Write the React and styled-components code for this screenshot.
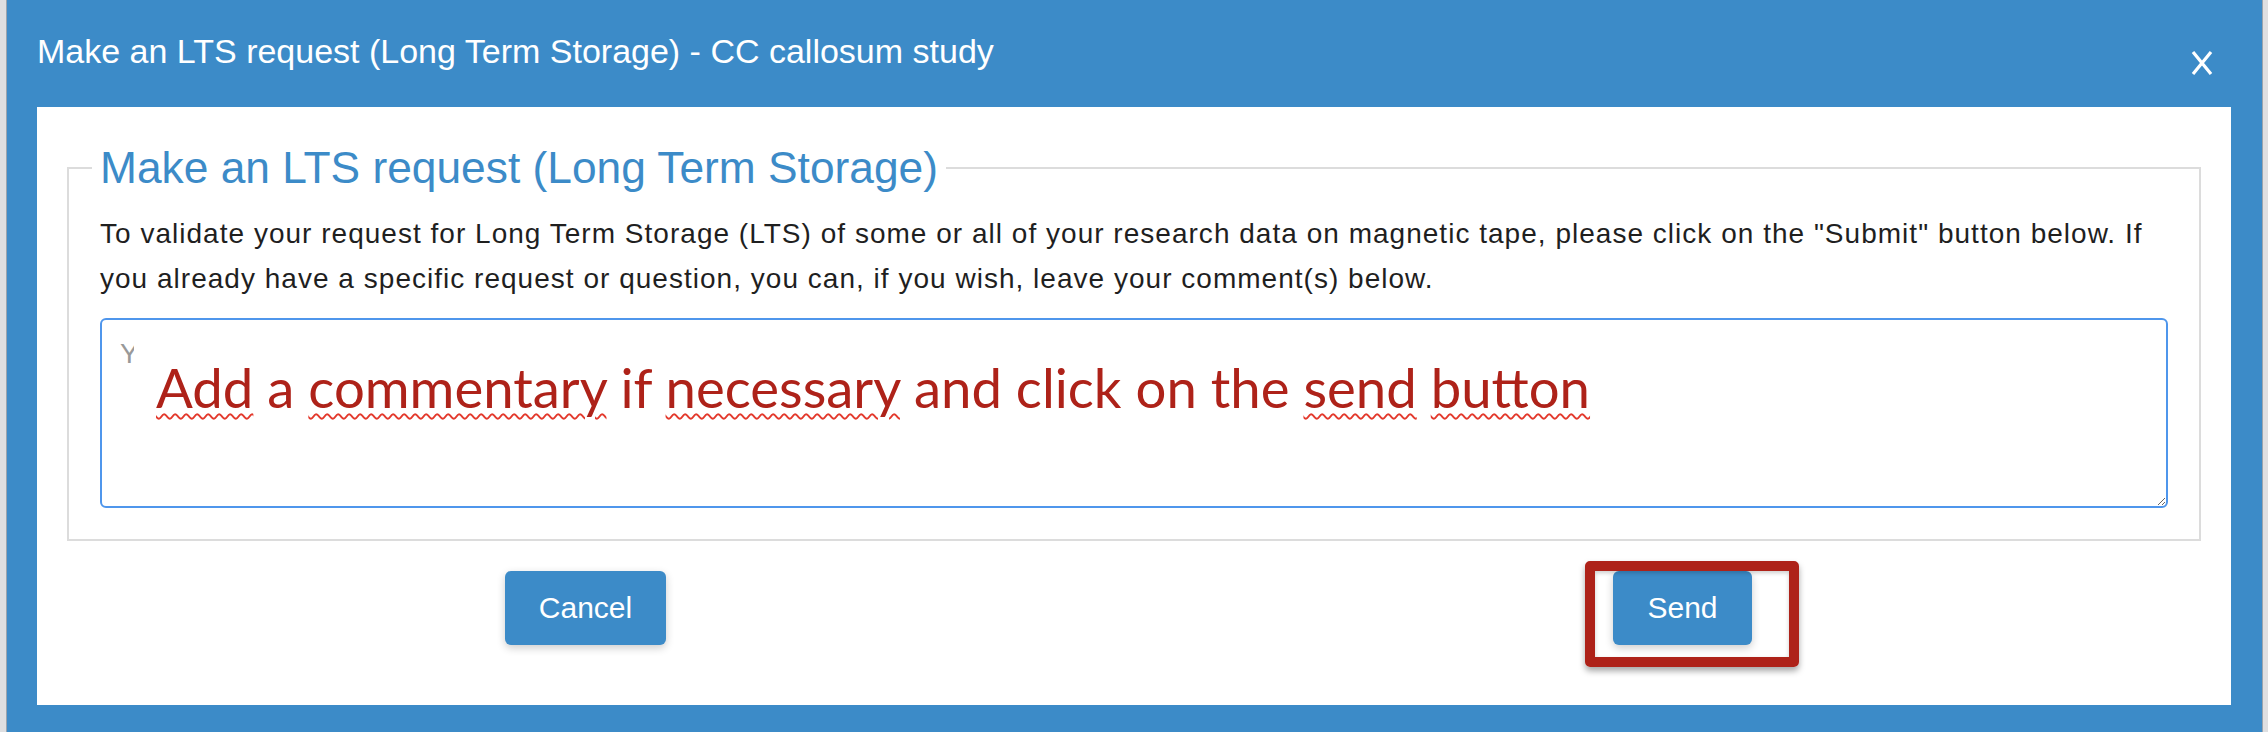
import React from "react";
import styled, { createGlobalStyle } from "styled-components";

const BLUE = "#3c8bc8";

const GlobalStyle = createGlobalStyle`
  html, body {
    margin: 0;
    padding: 0;
    width: 2268px;
    height: 732px;
    overflow: hidden;
    background: #dedfe1;
    font-family: "Liberation Sans", Arial, sans-serif;
  }
  * { box-sizing: border-box; }
`;

const Page = styled.div`
  display: flex;
  height: 732px;
  padding: 0 6px 0 7px;
`;

const Modal = styled.div`
  flex: 1;
  display: flex;
  flex-direction: column;
  background: ${BLUE};
  padding: 0 31px 27px 30px;
  box-shadow: -1px 0 0 #9aa4ae, 1px 0 0 #9aa4ae;
`;

const Header = styled.div`
  height: 107px;
  display: flex;
  justify-content: space-between;
  align-items: flex-start;
  padding: 32px 17px 0 0;
`;

const Title = styled.h4`
  margin: 0;
  font-size: 34px;
  line-height: 39px;
  font-weight: 400;
  color: #fff;
`;

const CloseButton = styled.button`
  margin-top: 19px;
  padding: 0;
  border: 0;
  background: transparent;
  width: 24px;
  height: 24px;
  display: flex;
  cursor: pointer;
`;

const Body = styled.div`
  flex: 1;
  background: #fff;
  padding: 36px 0 60px;
  display: flex;
  flex-direction: column;
`;

const Fieldset = styled.fieldset`
  margin: 0 30px;
  min-width: 0;
  border: 2px solid #dcdcdc;
  padding: 18px 31px 31px 31px;
`;

const Legend = styled.legend`
  margin-left: -8px;
  padding: 0 8px;
  font-size: 44.3px;
  line-height: 50px;
  color: ${BLUE};
  font-weight: 400;
`;

const Intro = styled.p`
  margin: 0 0 17px;
  font-size: 28px;
  line-height: 45px;
  letter-spacing: 1.02px;
  color: #1f1f1f;
`;

const CommentBox = styled.div`
  position: relative;
`;

const TextArea = styled.textarea`
  display: block;
  width: 100%;
  height: 190px;
  border: 2px solid #4f96ec;
  border-radius: 6px;
  padding: 11px 18px;
  font-family: "Liberation Sans", Arial, sans-serif;
  font-size: 28px;
  line-height: 45px;
  letter-spacing: 1px;
  color: #222;
  outline: none;
  &::placeholder {
    color: #999;
  }
`;

const Annotation = styled.div`
  position: absolute;
  left: 34px;
  top: 17px;
  padding: 20px 40px 14px 22px;
  background: #fff;
  font-family: Lato, "Open Sans", sans-serif;
  font-size: 54.5px;
  line-height: 1.2;
  color: #ae2219;
  white-space: nowrap;
  pointer-events: none;
`;

const Misspelled = styled.span`
  text-decoration: underline wavy #e3392c;
  text-decoration-thickness: 1.5px;
  text-underline-offset: 5px;
`;

const Actions = styled.div`
  display: grid;
  grid-template-columns: 1fr 1fr;
  margin-top: 30px;
`;

const ActionCell = styled.div`
  display: flex;
  justify-content: center;
`;

const Highlight = styled.div`
  position: relative;
`;

const HighlightFrame = styled.span`
  position: absolute;
  top: -10px;
  left: -28px;
  right: -47px;
  bottom: -22px;
  border: 10px solid #ae2219;
  border-radius: 5px;
  box-shadow: 0 4px 6px rgba(0, 0, 0, 0.35), inset 0 2px 4px rgba(0, 0, 0, 0.2);
  pointer-events: none;
`;

const Button = styled.button`
  height: 74px;
  padding: 0 34px;
  border: 0;
  border-radius: 6px;
  background: ${BLUE};
  color: #fff;
  font-family: "Liberation Sans", Arial, sans-serif;
  font-size: 30px;
  box-shadow: 0 3px 8px rgba(0, 0, 0, 0.2);
  cursor: pointer;
`;

export default function App() {
  return (
    <>
      <GlobalStyle />
      <Page>
        <Modal>
          <Header>
            <Title>Make an LTS request (Long Term Storage) - CC callosum study</Title>
            <CloseButton aria-label="Close">
              <svg width="24" height="24" viewBox="0 0 24 24">
                <path d="M3 1 L21 23 M21 1 L3 23" stroke="#fff" strokeWidth="3.2" fill="none" />
              </svg>
            </CloseButton>
          </Header>
          <Body>
            <Fieldset>
              <Legend>Make an LTS request (Long Term Storage)</Legend>
              <Intro>
                To validate your request for Long Term Storage (LTS) of some or all of your research data on
                magnetic tape, please click on the "Submit" button below. If you already have a specific request
                or question, you can, if you wish, leave your comment(s) below.
              </Intro>
              <CommentBox>
                <TextArea placeholder="Your comment(s)..." />
                <Annotation>
                  <Misspelled>Add</Misspelled> a <Misspelled>commentary</Misspelled> if{" "}
                  <Misspelled>necessary</Misspelled> and click on the <Misspelled>send</Misspelled>{" "}
                  <Misspelled>button</Misspelled>
                </Annotation>
              </CommentBox>
            </Fieldset>
            <Actions>
              <ActionCell>
                <Button>Cancel</Button>
              </ActionCell>
              <ActionCell>
                <Highlight>
                  <Button>Send</Button>
                  <HighlightFrame />
                </Highlight>
              </ActionCell>
            </Actions>
          </Body>
        </Modal>
      </Page>
    </>
  );
}
